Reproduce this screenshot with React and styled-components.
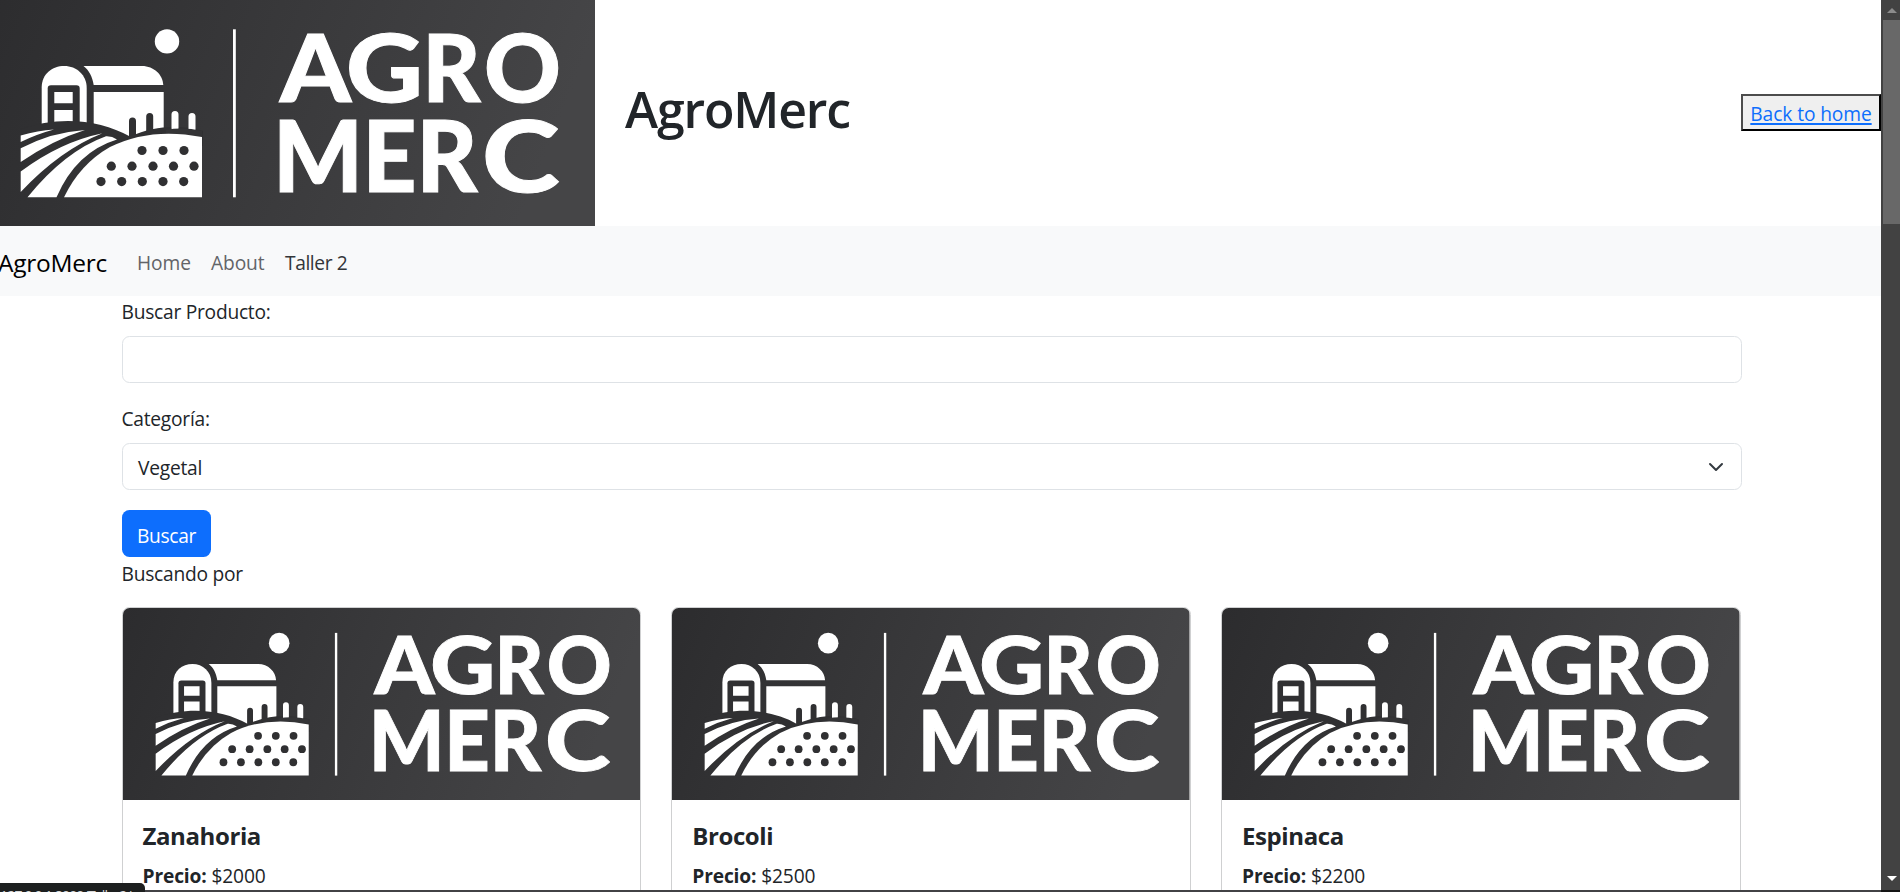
import React from "react";
import styled, { createGlobalStyle } from "styled-components";

const Global = createGlobalStyle`
  *, *::before, *::after { box-sizing: border-box; }
  html, body { margin: 0; height: 100%; overflow: hidden; }
  body {
    font-family: "Open Sans", "Noto Sans", sans-serif;
    font-size: 19.2px;
    letter-spacing: -0.25px;
    line-height: 30px;
    color: #212529;
    background: #fff;
  }
`;

const Window = styled.div`
  position: relative;
  display: flex;
  height: 892px;
  width: 1900px;
  overflow: hidden;
`;

const Page = styled.div`
  flex: 1;
  min-width: 0;
  height: 890px;
  overflow: hidden;
`;

const Header = styled.header`
  display: flex;
  align-items: center;
  height: 226px;
  margin-left: -18px;
`;

const LogoSvg = styled.svg`
  display: block;
  flex: none;
  width: ${(p) => p.$width};
  height: ${(p) => p.$height};
`;

const Letter = styled.text`
  font-family: "Lato", sans-serif;
  font-weight: 900;
  letter-spacing: 0;
  fill: #fff;
  stroke: #fff;
  stroke-width: 1;
`;

const Title = styled.h1`
  margin: 0 auto 8px 30px;
  font-size: 50px;
  line-height: 60px;
  font-weight: 600;
  letter-spacing: -1.15px;
`;

const HomeButton = styled.button`
  width: 140px;
  height: 37px;
  margin-bottom: 1px;
  padding: 3px 0 0;
  border: 2px solid;
  border-color: #4c4c4c #000 #000 #4c4c4c;
  background: #efefef;
  font: inherit;
  letter-spacing: -0.1px;
  line-height: 30px;
`;

const HomeLink = styled.a`
  color: #0d6efd;
  text-decoration: underline;
  text-decoration-thickness: 2px;
  text-underline-offset: 2px;
`;

const Navbar = styled.nav`
  display: flex;
  align-items: center;
  height: 70px;
  padding-top: 3px;
  background: #f8f9fa;
`;

const Brand = styled.a`
  margin-left: -2px;
  width: 139px;
  font-size: 24.5px;
  letter-spacing: -0.25px;
  color: #000;
`;

const NavLink = styled.a`
  width: ${(p) => p.$width};
  color: ${(p) => (p.$active ? "#323539" : "#626468")};
  letter-spacing: ${(p) => (p.$active ? "-0.4px" : "-0.1px")};
`;

const Container = styled.main`
  width: 1620px;
  margin-left: 122px;
`;

const Field = styled.div`
  margin-bottom: 20px;
`;

const Label = styled.label`
  display: block;
  height: 30px;
  margin-bottom: 10px;
  margin-left: -0.5px;
  padding-top: 1px;
`;

const Control = styled.div`
  display: flex;
  align-items: center;
  justify-content: space-between;
  height: 47px;
  padding: 3px 17px 0 15px;
  border: 1px solid #dee2e6;
  border-radius: 7.5px;
`;

const Chevron = styled.svg`
  width: 16px;
  height: 16px;
  margin-bottom: 3px;
`;

const Submit = styled.button`
  display: block;
  width: 89px;
  height: 47px;
  padding: 4px 0 0;
  border: 0;
  border-radius: 7.5px;
  background: #0d6efd;
  color: #fff;
  font: inherit;
  letter-spacing: -0.3px;
`;

const Status = styled.p`
  margin: 0 0 20px -0.5px;
  height: 30px;
  padding-top: 2px;
`;

const Cards = styled.div`
  display: grid;
  grid-template-columns: repeat(3, 519.5px);
  column-gap: 30.25px;
  margin-left: -0.5px;
`;

const Card = styled.article`
  height: 400px;
  border: 1px solid #cfd0d1;
  border-radius: 7.5px;
  overflow: hidden;
`;

const CardBody = styled.div`
  padding: 21px 20px;
`;

const CardTitle = styled.h5`
  margin: 0 0 10px;
  font-size: 24px;
  line-height: 30px;
  font-weight: 700;
  letter-spacing: -0.4px;
`;

const Price = styled.p`
  margin: 0;
  letter-spacing: -0.15px;
`;

const Scrollbar = styled.div`
  display: flex;
  flex-direction: column;
  align-items: center;
  width: 19px;
  height: 892px;
  padding: 8px 0 9px;
  background: #424242;
  border-bottom: 2px solid #141414;
`;

const Arrow = styled.i`
  width: 0;
  height: 0;
  margin-left: 2px;
  border: 5px solid transparent;
  border-top-width: ${(p) => (p.$up ? 0 : "5px")};
  border-bottom-width: ${(p) => (p.$up ? "5px" : 0)};
  border-${(p) => (p.$up ? "bottom" : "top")}-color: ${(p) => (p.$up ? "#8b8b8b" : "#fff")};
`;

const Thumb = styled.div`
  width: 17px;
  height: 204px;
  margin: 7px 0 auto 2px;
  background: #686868;
`;

const BottomEdge = styled.div`
  position: absolute;
  left: 0;
  bottom: 0;
  width: 1881px;
  height: 2px;
  background: #424245;
`;

const LinkPreview = styled.div`
  position: absolute;
  left: 0;
  bottom: 0;
  width: 145px;
  height: 9px;
  padding: 4px 0 0;
  overflow: hidden;
  border-top-right-radius: 5px;
  background: #1d1f1f;
  color: #d8d8d8;
  font-size: 14px;
  letter-spacing: -0.8px;
  line-height: 18px;
  white-space: nowrap;
`;

const dots = [
  [142, 150.5], [163, 150.5], [184, 150.5],
  [111.3, 166.2], [132, 166.2], [153, 166.2], [173.5, 166.2], [194, 166.2],
  [101, 181.6], [121.7, 181.6], [142.3, 181.6], [163, 181.6], [183.7, 181.6],
];

const letters = [
  { char: "A", x: 280, y: 101.6, size: 94, width: 71 },
  { char: "G", x: 346, y: 101.6, size: 94, width: 77 },
  { char: "R", x: 422.5, y: 101.6, size: 94, width: 58 },
  { char: "O", x: 484, y: 101.6, size: 94, width: 77 },
  { char: "M", x: 273, y: 192, size: 98.5, width: 90 },
  { char: "E", x: 362.5, y: 192, size: 98.5, width: 54 },
  { char: "R", x: 416.5, y: 192, size: 98.5, width: 61 },
  { char: "C", x: 482, y: 192, size: 98.5, width: 77.5 },
];

function Logo({ id, width, height }) {
  return (
    <LogoSvg $width={width} $height={height} viewBox="0 0 613 226" preserveAspectRatio="none">
      <defs>
        <linearGradient id={id} x1="0" y1="0" x2="1" y2="0.15">
          <stop offset="0" stopColor="#2c2c2e" />
          <stop offset="1" stopColor="#454547" />
        </linearGradient>
      </defs>
      <rect width="613" height="226" fill={`url(#${id})`} />
      <g transform="translate(18 0)">
        <g fill="#fff">
          <circle cx="167" cy="41.4" r="12.2" />
          <rect x="233" y="29.3" width="2.8" height="168" />
          <path d="M41.7 126V87.5C41.7 74 52 66 64.3 66S86.7 75 86.7 88V126Z" />
          <path d="M83.5 66H142C154 66 163 75 163.3 85H93.7C92.5 77 89 70 83.5 66Z" />
          <path d="M93.7 92H163.7V140H93.7Z" />
        </g>
        <path d="M47.7 128V88.5Q47.7 85.3 51 85.3H76.5Q79.7 85.3 79.7 88.5V128Z" fill="#303032" />
        <path d="M54.3 92H72.7V103.3H54.3ZM54.3 110H72.7V126H54.3Z" fill="#fff" />
        <path d="M20 129.5C60 115 100 120 130 136.5C156 125 180 125 203 131V146H20Z" fill="#303032" />
        <g fill="none" stroke="#303032" strokeWidth="7" strokeLinecap="round">
          <path d="M132.5 121V140M149.7 116.5V140" />
          <path d="M175 114.5V128M192 116.5V129" stroke="#fff" />
        </g>
        <path d="M166 130Q183 126.6 202 131V136H166Z" fill="#343436" />
        <g fill="#fff">
          <path d="M20.7 135.5Q38 130.3 54 129.5Q37 134 20.7 142Z" />
          <path d="M20.7 148.3Q52 132 85 130Q53 140 20.7 162Z" />
          <path d="M20.7 171.5Q60 142 102.5 133.2Q60 150 20.7 192Z" />
          <path d="M27.5 197.3Q65 151 106 136.3Q112 136 117 139.5Q76 152 56.5 197.3Z" />
          <path d="M64 197.3Q80 164 110 147Q150 127 202 137V197.3Z" />
        </g>
        <g fill="#303032">
          {dots.map(([x, y]) => <circle key={`${x}-${y}`} cx={x} cy={y} r="4.6" />)}
        </g>
        {letters.map((l) => (
          <Letter
            key={`${l.char}${l.y}`}
            x={l.x}
            y={l.y}
            fontSize={l.size}
            textLength={l.width}
            lengthAdjust="spacingAndGlyphs"
          >
            {l.char}
          </Letter>
        ))}
      </g>
    </LogoSvg>
  );
}

const products = [
  { name: "Zanahoria", price: "$2000" },
  { name: "Brocoli", price: "$2500" },
  { name: "Espinaca", price: "$2200" },
];

export default function App() {
  return (
    <>
      <Global />
      <Window>
        <Page>
          <Header>
            <Logo id="header-logo" width="613px" height="226px" />
            <Title>AgroMerc</Title>
            <HomeButton><HomeLink>Back to home</HomeLink></HomeButton>
          </Header>
          <Navbar>
            <Brand>AgroMerc</Brand>
            <NavLink $width="74px">Home</NavLink>
            <NavLink $width="74px">About</NavLink>
            <NavLink $width="80px" $active>Taller 2</NavLink>
          </Navbar>
          <Container>
            <Field>
              <Label>Buscar Producto:</Label>
              <Control />
            </Field>
            <Field>
              <Label>Categoría:</Label>
              <Control>
                Vegetal
                <Chevron viewBox="0 0 16 16" fill="none" stroke="#343a40" strokeWidth="2" strokeLinecap="round" strokeLinejoin="round">
                  <path d="m2 5 6 6 6-6" />
                </Chevron>
              </Control>
            </Field>
            <Submit>Buscar</Submit>
            <Status>Buscando por</Status>
            <Cards>
              {products.map((p) => (
                <Card key={p.name}>
                  <Logo id={`logo-${p.name}`} width="100%" height="192px" />
                  <CardBody>
                    <CardTitle>{p.name}</CardTitle>
                    <Price><b>Precio:</b> {p.price}</Price>
                  </CardBody>
                </Card>
              ))}
            </Cards>
          </Container>
        </Page>
        <Scrollbar>
          <Arrow $up />
          <Thumb />
          <Arrow />
        </Scrollbar>
        <BottomEdge />
        <LinkPreview>127.0.0.1:8000/Taller2/</LinkPreview>
      </Window>
    </>
  );
}
